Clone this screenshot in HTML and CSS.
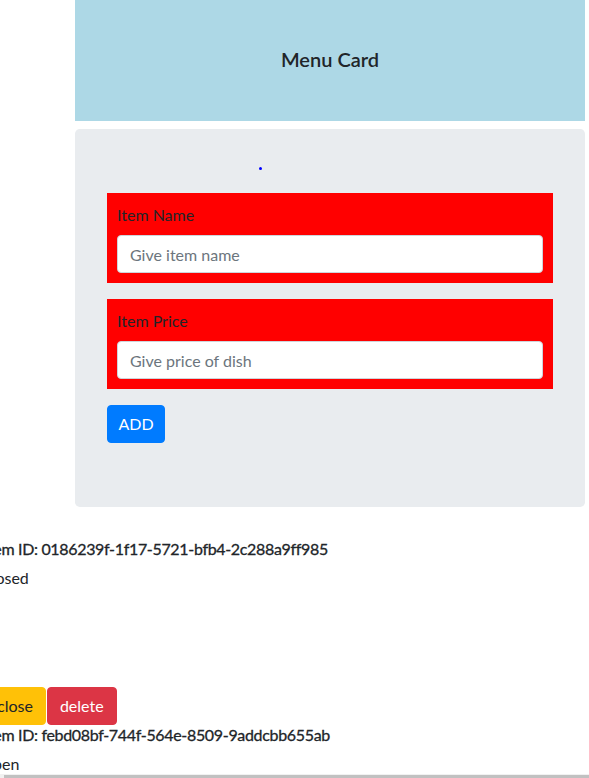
FILE: index.html
```html
<!DOCTYPE html>
<html lang="en">
<head>
<meta charset="utf-8">
<title>Menu Card</title>
<link rel="stylesheet" href="styles.css">
</head>
<body>
<div class="page">
  <div class="menu">
    <header class="menu-header"><h1 class="menu-title">Menu Card</h1></header>
    <div class="jumbotron">
      <span class="dot"></span>
      <form class="menu-form">
        <div class="form-group">
          <label class="form-label" for="name">Item Name</label>
          <input class="form-control" id="name" type="text" placeholder="Give item name">
        </div>
        <div class="form-group">
          <label class="form-label" for="price">Item Price</label>
          <input class="form-control" id="price" type="text" placeholder="Give price of dish">
        </div>
        <button type="button" class="btn btn-primary">ADD</button>
      </form>
    </div>
  </div>
  <div class="items">
    <div class="item">
      <h6 class="item-id">Item ID: 0186239f-1f17-5721-bfb4-2c288a9ff985</h6>
      <p class="item-status">closed</p>
      <div class="item-spacer"></div>
      <div class="item-actions">
        <button type="button" class="btn btn-warning">close</button>
        <button type="button" class="btn btn-danger">delete</button>
      </div>
    </div>
    <div class="item">
      <h6 class="item-id">Item ID: febd08bf-744f-564e-8509-9addcbb655ab</h6>
      <p class="item-status">open</p>
    </div>
  </div>
</div>
<div class="hscroll"><div class="hscroll-thumb"></div></div>
</body>
</html>
```
FILE: styles.css
```css
* { box-sizing: border-box; }
html, body { margin: 0; padding: 0; }
body {
  font-family: Lato, "Open Sans", sans-serif;
  font-size: 16px;
  line-height: 1.5;
  color: #212529;
  background: #fff;
  overflow: hidden;
}
.page { display: flex; flex-direction: column; }
.menu { margin-left: 75px; width: 510px; }
.menu-header {
  height: 121px;
  padding-bottom: 4px;
  background: #add8e6;
  display: flex;
  align-items: center;
  justify-content: center;
}
.menu-title { margin: 0; font-size: 20px; font-weight: 600; line-height: 1.2; }
.jumbotron {
  position: relative;
  margin-top: 8px;
  margin-bottom: 32px;
  background: #e9ecef;
  border-radius: 4.8px;
  padding: 64px 32px;
}
.dot {
  position: absolute;
  left: 184px;
  top: 38px;
  width: 3px;
  height: 3px;
  border-radius: 50%;
  background: #0000ff;
}
.form-group {
  background: #ff0000;
  padding: 10px;
  margin-bottom: 16px;
  display: flex;
  flex-direction: column;
}
.form-label { display: block; margin-bottom: 8px; color: #212529; }
.form-control {
  display: block;
  width: 100%;
  height: 38px;
  padding: 6px 12px;
  font: inherit;
  color: #495057;
  background: #fff;
  border: 1px solid #ced4da;
  border-radius: 4px;
}
.form-control::placeholder { color: #6c757d; opacity: 1; }
.btn {
  display: inline-block;
  height: 38px;
  padding: 6px 12px;
  font: inherit;
  line-height: 1.5;
  border: 1px solid transparent;
  border-radius: 4px;
  cursor: pointer;
}
.btn-primary { background: #007bff; border-color: #007bff; color: #fff; padding: 6px 10.5px; }
.btn-warning { background: #ffc107; border-color: #ffc107; color: #212529; }
.btn-danger { background: #dc3545; border-color: #dc3545; color: #fff; }
.items { margin-left: -16px; }
.item-id {
  margin: 0 0 8px;
  font-size: 16px;
  font-weight: 400;
  line-height: 1.2;
  letter-spacing: -0.33px;
  -webkit-text-stroke: 0.3px currentColor;
}
.item-status { margin: 0 0 16px; }
.item-spacer { height: 81px; }
.item-actions { display: flex; gap: 1px; }
.hscroll {
  position: fixed;
  left: 0;
  right: 0;
  bottom: 0;
  height: 4px;
  background: #f1f1f1;
  padding: 1px 0 0 4px;
}
.hscroll-thumb { height: 3px; background: #c1c1c1; }
```
